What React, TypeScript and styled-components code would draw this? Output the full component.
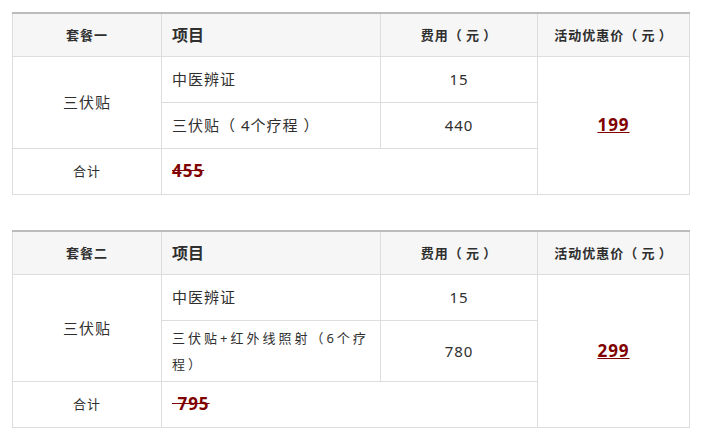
import styled, { createGlobalStyle } from "styled-components";

interface FeeItem {
  label: string;
  fee: string;
  compact?: boolean;
}

interface Package {
  name: string;
  service: string;
  items: FeeItem[];
  total: string;
  price: string;
}

const packages: Package[] = [
  {
    name: "套餐一",
    service: "三伏贴",
    items: [
      { label: "中医辨证", fee: "15" },
      { label: "三伏贴（ 4个疗程 ）", fee: "440" },
    ],
    total: "455",
    price: "199",
  },
  {
    name: "套餐二",
    service: "三伏贴",
    items: [
      { label: "中医辨证", fee: "15" },
      { label: "三伏贴+红外线照射（6个疗程）", fee: "780", compact: true },
    ],
    total: "\u00a0795",
    price: "299",
  },
];

const GlobalStyle = createGlobalStyle`
  body {
    margin: 0;
    padding: 12px;
    background: #ffffff;
    font-family: "Noto Sans", "Noto Sans CJK SC", sans-serif;
    color: #333333;
  }
`;

const Page = styled.div`
  display: flex;
  flex-direction: column;
  gap: 35px;
`;

const Table = styled.table`
  width: 677px;
  border-collapse: collapse;
  table-layout: fixed;
`;

const HeadCell = styled.th<{ $left?: boolean; $big?: boolean }>`
  background: #f6f6f6;
  border: 1px solid #dddddd;
  border-top: 2px solid #bbbbbb;
  padding: 10px ${(p) => (p.$left ? "10px" : "4px")};
  height: 22px;
  line-height: 22px;
  text-align: ${(p) => (p.$left ? "left" : "center")};
  font-size: ${(p) => (p.$big ? "16px" : "13px")};
  letter-spacing: ${(p) => (p.$big ? "0" : "1px")};
  font-weight: bold;
  color: #2f2f2f;
`;

const Cell = styled.td<{ $left?: boolean; $compact?: boolean; $small?: boolean }>`
  border: 1px solid #dddddd;
  padding: ${(p) => (p.$compact ? "4px 10px" : "11px 10px")};
  height: ${(p) => (p.$compact ? "52px" : "23px")};
  line-height: ${(p) => (p.$compact ? "26px" : "23px")};
  text-align: ${(p) => (p.$left ? "left" : "center")};
  font-size: ${(p) => (p.$compact ? "13px" : p.$small ? "13px" : "15px")};
  letter-spacing: ${(p) => (p.$compact ? "3px" : "1px")};
  color: #2f2f2f;
  vertical-align: middle;
`;

const Total = styled.s`
  font-size: 17px;
  line-height: 18px;
  font-weight: bold;
  color: #800000;
  letter-spacing: 1px;
`;

const Price = styled.u`
  font-size: 17px;
  line-height: 18px;
  font-weight: bold;
  color: #800000;
  letter-spacing: 1px;
`;

function PackageTable({ pkg }: { pkg: Package }) {
  return (
    <Table>
      <colgroup>
        <col style={{ width: 149 }} />
        <col style={{ width: 219 }} />
        <col style={{ width: 157 }} />
        <col style={{ width: 152 }} />
      </colgroup>
      <thead>
        <tr>
          <HeadCell>{pkg.name}</HeadCell>
          <HeadCell $left $big>
            项目
          </HeadCell>
          <HeadCell>费用（{"\u2009"}元{"\u2009"}）</HeadCell>
          <HeadCell>活动优惠价（{"\u2009"}元{"\u2009"}）</HeadCell>
        </tr>
      </thead>
      <tbody>
        {pkg.items.map((item, i) => (
          <tr key={item.label}>
            {i === 0 && <Cell rowSpan={pkg.items.length}>{pkg.service}</Cell>}
            <Cell $left $compact={item.compact}>
              {item.label}
            </Cell>
            <Cell>{item.fee}</Cell>
            {i === 0 && (
              <Cell rowSpan={pkg.items.length + 1}>
                <Price>{pkg.price}</Price>
              </Cell>
            )}
          </tr>
        ))}
        <tr>
          <Cell $small>合计</Cell>
          <Cell $left colSpan={2}>
            <Total>{pkg.total}</Total>
          </Cell>
        </tr>
      </tbody>
    </Table>
  );
}

export default function App() {
  return (
    <>
      <GlobalStyle />
      <Page>
        {packages.map((pkg) => (
          <PackageTable key={pkg.name} pkg={pkg} />
        ))}
      </Page>
    </>
  );
}
